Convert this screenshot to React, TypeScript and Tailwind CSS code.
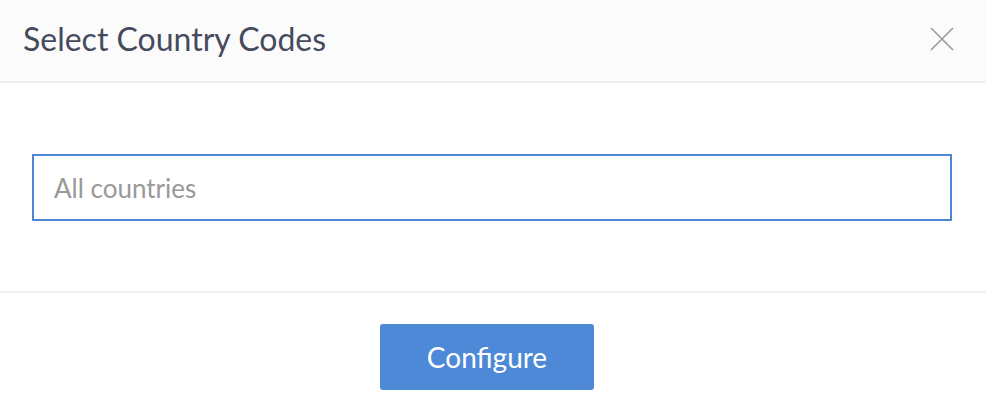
import React from 'react';

export default function App() {
  return (
    <div className="w-[986px] h-[408px] bg-white overflow-hidden font-['Lato','Noto_Sans',sans-serif]">
      {/* Header */}
      <div className="h-[83px] bg-[#fbfbfc] border-b-2 border-[#efefef] flex items-center justify-between pl-[23px] pr-[32px]">
        <h1 className="text-[32px] text-[#454b5c] leading-none -mt-[4px]">Select Country Codes</h1>
        <button type="button" className="w-[24px] h-[24px] -mt-[3px] text-[#9a9a9a]" aria-label="Close">
          <svg viewBox="0 0 24 24" width="24" height="24" fill="none" stroke="currentColor" strokeWidth="1.6">
            <path d="M1 1L23 23M23 1L1 23" />
          </svg>
        </button>
      </div>

      {/* Body */}
      <div className="h-[210px] border-b-2 border-[#efefef] px-[32px] pt-[71px]">
        <input
          type="text"
          placeholder="All countries"
          className="w-[920px] h-[67px] border-2 border-[#4d86d4] px-[20px] text-[26px] text-[#333] placeholder:text-[#999] outline-none"
        />
      </div>

      {/* Footer */}
      <div className="flex justify-center pt-[31px] pr-[12px]">
        <button
          type="button"
          className="w-[214px] h-[66px] bg-[#4d89d6] text-white text-[28px] rounded-[3px]"
        >
          Configure
        </button>
      </div>
    </div>
  );
}
